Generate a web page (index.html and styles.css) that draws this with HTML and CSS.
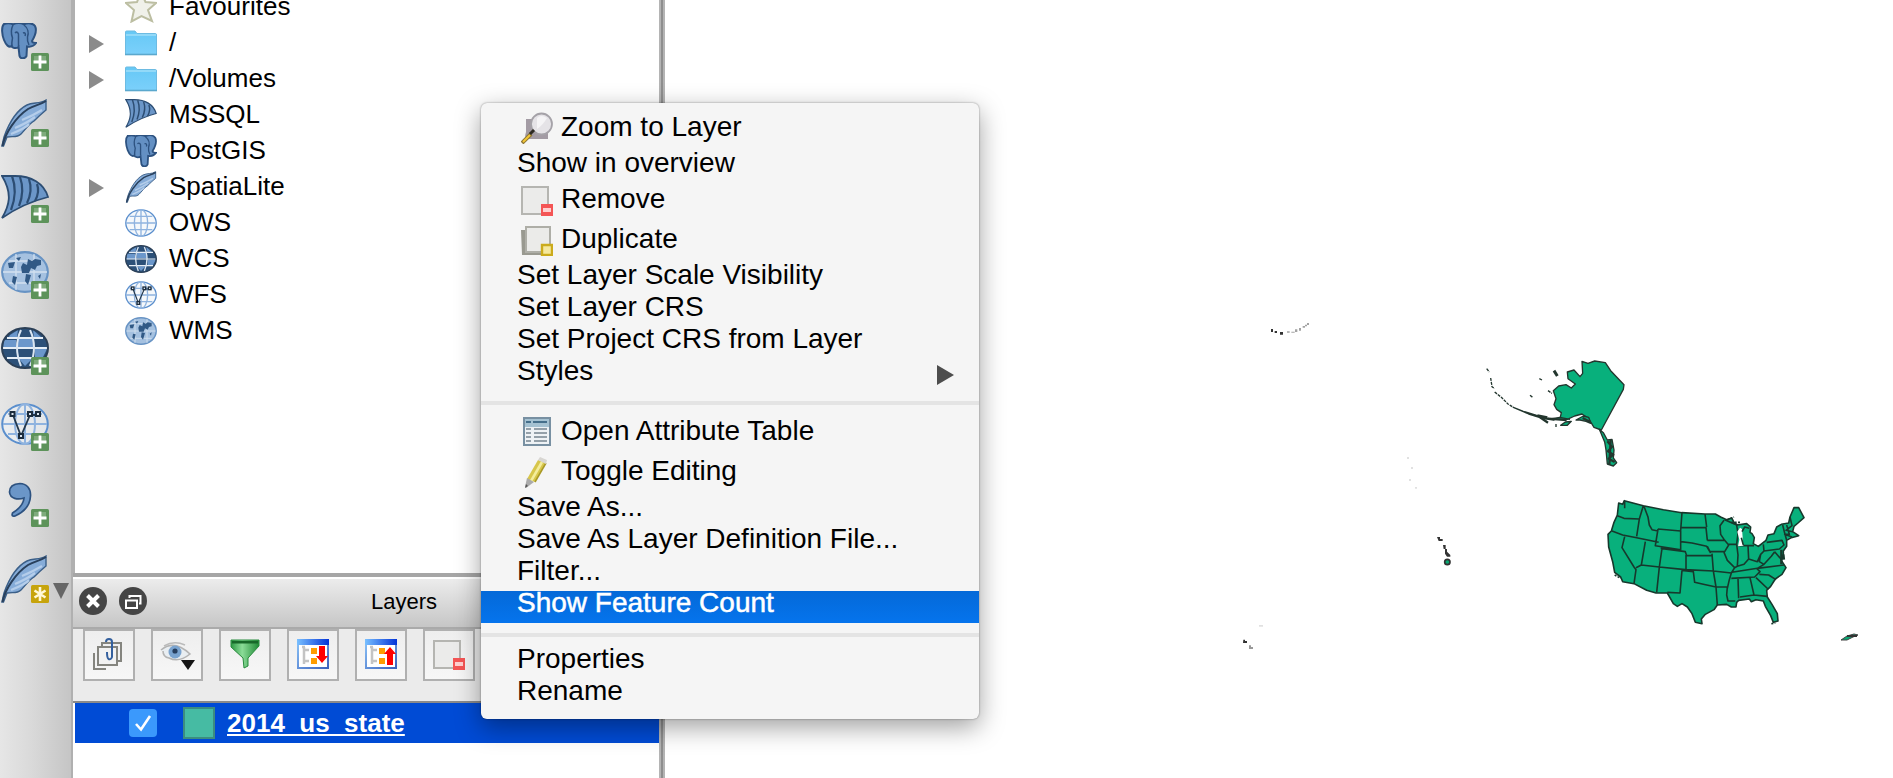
FILE: index.html
```html
<!DOCTYPE html>
<html lang="en">
<head>
<meta charset="utf-8">
<title>QGIS</title>
<link rel="stylesheet" href="styles.css">
</head>
<body>
<svg class="defs" aria-hidden="true">
  <defs>
    <linearGradient id="folderFill" x1="0" y1="0" x2="0" y2="1"><stop offset="0" stop-color="#66c8f5"/><stop offset="1" stop-color="#7bd0fb"/></linearGradient>
    <linearGradient id="funnelFill" x1="0" y1="0" x2="1" y2="0"><stop offset="0" stop-color="#2c9a43"/><stop offset=".4" stop-color="#8bdc98"/><stop offset="1" stop-color="#1f8a35"/></linearGradient>
    <linearGradient id="barFill" x1="0" y1="0" x2="1" y2="0"><stop offset="0" stop-color="#79c0ff"/><stop offset="1" stop-color="#0233d8"/></linearGradient>
    <linearGradient id="frameFill" x1="0" y1="0" x2="1" y2="1"><stop offset="0" stop-color="#8cc4f8"/><stop offset="1" stop-color="#3c62bd"/></linearGradient>
  </defs>
  <symbol id="elephant" viewBox="0 0 36 36">
    <path d="M3 1C7-.2 10 .4 12 1.400C15 0 20 0 23 1.200C27-.2 32 0 34 3C36 7 34 13 31 18C31 20 33 20 35 20C33 23 29 24 26 23.500L25.500 33C24 36 19.500 36.300 18.500 33L17.500 24C15 26 11 25 10.500 23C8 25 5 22 3 17C1 12 0 4 3 1Z" fill="#6490c3" stroke="#2d5280" stroke-width="2"/>
    <path d="M12 2C10 6 10 11 11.500 15C11 18 10.500 20 11 23M23 2C27 5 28 10 26.500 14C26 18 27 20 28 22M14 10C16 8 18 10 17.500 13L17.500 23M22 10C24 9 25 11 24 13" fill="none" stroke="#2d5280" stroke-width="1.500"/>
  </symbol>
  <symbol id="feather" viewBox="0 0 46 48">
    <path d="M1 47L3 38C8 24 16 11 26 6C32 3 39 5 45 1L45 11C39 16 37 18 33 22C28 25 24 31 20 35C16 39 12 37 6 38L2.500 47Z" fill="#86acd8" stroke="#3b5f88" stroke-width="1.400"/>
    <path d="M10 35Q25 29 28 25M14 29Q26 24 34 18M21 21Q31 17 41 11" fill="none" stroke="#b4cdea" stroke-width="2.200"/>
    <path d="M1.500 47C4 34 15 18 27 10C34 6 39 6 45 2" fill="none" stroke="#29405c" stroke-width="2"/>
  </symbol>
  <symbol id="fan" viewBox="0 0 48 44">
    <path d="M1 1L14 1C30 1 43 8 47 22C31 26 17 32 1 43C8 31 12 19 1 1Z" fill="#6b96c8" stroke="#2c4d73" stroke-width="1.800"/>
    <path d="M11 1Q17 17 10 35M19 2Q24 16 18 31M28 4Q32 16 26 28M36 9Q39 17 34 26" fill="none" stroke="#2c4d73" stroke-width="2.200"/>
  </symbol>
  <symbol id="globeLight" viewBox="0 0 48 42">
    <ellipse cx="24" cy="21" rx="22.800" ry="19.800" fill="#eef3f9" fill-opacity=".6" stroke="#5b8fcd" stroke-width="2"/>
    <path d="M2 21H46M7 11H41M7 31H41M24 1V41" stroke="#8fb3df" stroke-width="2" fill="none"/>
    <ellipse cx="24" cy="21" rx="10" ry="20" fill="none" stroke="#8fb3df" stroke-width="2"/>
  </symbol>
  <symbol id="globeDark" viewBox="0 0 48 42">
    <ellipse cx="24" cy="21" rx="23" ry="20" fill="#2c5078"/>
    <path d="M3 13H15V21H2ZM34 22H46L42 30H34ZM17 12H33V20H17ZM18 32H31L24 39ZM9 8L17 3L16 10H8ZM32 3L40 10H33Z" fill="#6b97cb"/>
    <path d="M2 21H46M6 11H42M6 31H42" stroke="#e6eef6" stroke-width="1.800"/>
    <path d="M20 3Q12 20 20 39M29 3Q37 20 29 39" stroke="#dbe6f2" stroke-width="2" fill="none"/>
    <ellipse cx="24" cy="21" rx="23" ry="20" fill="none" stroke="#2b3f56" stroke-width="2"/>
  </symbol>
  <symbol id="globeMap" viewBox="0 0 48 42">
    <ellipse cx="24" cy="21" rx="22.800" ry="19.800" fill="#a5c1e0" stroke="#6793c4" stroke-width="2.200"/>
    <path d="M2 21H46M8 10H40M8 32H40M15 3V39M33 3V39" stroke="#d3e1f0" stroke-width="1.300"/>
    <path d="M7 12L14 11L12 17H8ZM20 16L22 12L26 14L27 8L31 10L34 8L40 9V14L36 15L34 19L30 17L28 22H21ZM25 23L30 24L27 34L24 30ZM12 25L16 26L14 34L11 31ZM15 7L20 6L18 10ZM37 25L40 23L39 28Z" fill="#315985"/>
  </symbol>
  <symbol id="globeVector" viewBox="0 0 48 42">
    <use href="#globeLight" width="48" height="42"/>
    <path d="M12 12L20 33L29 12H38" fill="none" stroke="#24384c" stroke-width="1.800"/>
    <g fill="#dce5ef" stroke="#1c2c3c" stroke-width="2"><rect x="9.500" y="9" width="4" height="4"/><rect x="18" y="31" width="4" height="4"/><rect x="27" y="9" width="4" height="4"/><rect x="35" y="9" width="4" height="4"/></g>
  </symbol>
  <symbol id="plus" viewBox="0 0 18 18"><rect width="18" height="18" rx="1.500" fill="#5d935a"/><path d="M3 3H15V10H3Z" fill="#a2c3a0" opacity=".5"/><path d="M9 2.500V15.500M2.500 9H15.500" stroke="#fff" stroke-width="2.800"/></symbol>
  <symbol id="folder" viewBox="0 0 32 32"><path d="M.5 5Q.5 4 1.500 4H10L12 6.500H30.500Q31.500 6.500 31.500 8V27.500H.5Z" fill="url(#folderFill)" stroke="#6dbbe2" stroke-width="1"/><path d="M1 8H31" stroke="#a1def9" stroke-width="1.500"/><path d="M0 27.500H32" stroke="#5ba8cd" stroke-width="1.600"/></symbol>
  <symbol id="remove" viewBox="0 0 32 32"><path d="M1 3H27V30H1Z" fill="#ebebea" stroke="#b5b5b1" stroke-width="2"/><path d="M20 20H32V32H20Z" fill="#f45555"/><path d="M22 24H30V28H22Z" fill="#ffd0d0"/></symbol>
</svg>

<div class="app">
  <nav class="rail">
    <svg class="tool" viewBox="0 0 48 48"><use href="#elephant" width="36" height="36"/><use href="#plus" x="30" y="30" width="18" height="18"/></svg>
    <svg class="tool" viewBox="0 0 48 48"><use href="#feather" width="46" height="48"/><use href="#plus" x="30" y="30" width="18" height="18"/></svg>
    <svg class="tool" viewBox="0 0 48 48"><use href="#fan" width="48" height="44"/><use href="#plus" x="30" y="30" width="18" height="18"/></svg>
    <svg class="tool" viewBox="0 0 48 48"><use href="#globeMap" width="48" height="42"/><use href="#plus" x="30" y="30" width="18" height="18"/></svg>
    <svg class="tool" viewBox="0 0 48 48"><use href="#globeDark" width="48" height="42"/><use href="#plus" x="30" y="30" width="18" height="18"/></svg>
    <svg class="tool" viewBox="0 0 48 48"><use href="#globeVector" width="48" height="42"/><use href="#plus" x="30" y="30" width="18" height="18"/></svg>
    <svg class="tool" viewBox="0 0 48 48"><path d="M19 4.500C25 4.500 30 9 29.500 17C29 27 23 33 14 37Q10 38 11.500 34C18 30 22.500 26 23 19C17 21 9 20 8.500 13Q8.500 5 19 4.500Z" fill="#6b96c8" stroke="#2d5280" stroke-width="1.700"/><use href="#plus" x="30" y="30" width="18" height="18"/></svg>
    <div class="tool-split">
      <svg class="tool" viewBox="0 0 48 48"><use href="#feather" width="46" height="48"/><rect x="30" y="30" width="18" height="18" rx="1.500" fill="#c7a40c"/><path d="M39 32V46M33.500 35.500L44.500 42.500M44.500 35.500L33.500 42.500" stroke="#fff8d6" stroke-width="2.600"/></svg>
      <svg class="caret" viewBox="0 0 16 16"><path d="M0 0H16L8 16Z" fill="#666"/></svg>
    </div>
  </nav>

  <div class="side">
    <section class="browser">
      <div class="row"><span class="twist"></span><svg class="ico" viewBox="0 0 32 32"><path d="M16 1L20.500 11L31 12L23 19L27 30L16.500 25L6.500 30.500L9 19L1 12L12 11Z" fill="#f0f1ea" stroke="#bcbea2" stroke-width="2"/></svg><span class="label">Favourites</span></div>
      <div class="row"><span class="twist open"></span><svg class="ico"><use href="#folder"/></svg><span class="label">/</span></div>
      <div class="row"><span class="twist open"></span><svg class="ico"><use href="#folder"/></svg><span class="label">/Volumes</span></div>
      <div class="row"><span class="twist"></span><svg class="ico"><use href="#fan" width="32" height="29"/></svg><span class="label">MSSQL</span></div>
      <div class="row"><span class="twist"></span><svg class="ico"><use href="#elephant"/></svg><span class="label">PostGIS</span></div>
      <div class="row"><span class="twist open"></span><svg class="ico"><use href="#feather"/></svg><span class="label">SpatiaLite</span></div>
      <div class="row"><span class="twist"></span><svg class="ico"><use href="#globeLight"/></svg><span class="label">OWS</span></div>
      <div class="row"><span class="twist"></span><svg class="ico"><use href="#globeDark"/></svg><span class="label">WCS</span></div>
      <div class="row"><span class="twist"></span><svg class="ico"><use href="#globeVector"/></svg><span class="label">WFS</span></div>
      <div class="row"><span class="twist"></span><svg class="ico"><use href="#globeMap"/></svg><span class="label">WMS</span></div>
    </section>
    <section class="layers">
      <header class="dock-title">
        <svg class="round" viewBox="0 0 28 28"><circle cx="14" cy="14" r="14" fill="#454545"/><path d="M8.500 8.500L19.500 19.500M19.500 8.500L8.500 19.500" stroke="#fff" stroke-width="4"/></svg>
        <svg class="round" viewBox="0 0 28 28"><circle cx="14" cy="14" r="14" fill="#454545"/><path d="M7 13.500H18V21H7ZM10.500 11V9H21.500V16.500H20" fill="none" stroke="#fff" stroke-width="2"/></svg>
        <span class="dock-name">Layers</span>
      </header>
      <div class="dock-tools">
        <span class="btn"><svg viewBox="0 0 32 32"><path d="M9 9V5H28V23H24M1 15V31H13" fill="none" stroke="#85857f" stroke-width="2"/><path d="M5 9H24V27H5Z" fill="#f2f2f2" stroke="#85857f" stroke-width="2"/><path d="M13 4Q13 1 16 1Q19 1 19 4V19Q18 22 15.500 21Q14 20 14 14" fill="none" stroke="#34609e" stroke-width="2"/></svg></span>
        <span class="btn"><svg viewBox="0 0 32 32"><path d="M0 12Q13 1 29 16Q18 25 8 20Q2 19 2 13" fill="#e9eef2" stroke="#b4b4b4" stroke-width="1.600"/><path d="M3 8Q13 2 24 7" fill="none" stroke="#bbb" stroke-width="1.500"/><circle cx="14" cy="14" r="6.500" fill="#79a3cf"/><circle cx="14" cy="13" r="2.600" fill="#263e5e"/><path d="M20 22H34L27 32Z" fill="#151515"/></svg></span>
        <span class="btn"><svg viewBox="0 0 32 32"><path d="M2 2H30V8L19 20V28L15 30L14 20L2 9Z" fill="url(#funnelFill)" stroke="#278a3c" stroke-width="1"/><path d="M3 3H29V5.500H3Z" fill="#18692a"/></svg></span>
        <span class="btn"><svg viewBox="0 0 32 32"><path d="M1 2H31V30H1Z" fill="#fff" stroke="url(#frameFill)" stroke-width="2"/><path d="M0 1H32V7H0Z" fill="url(#barFill)"/><path d="M7 9V26M7 12H12M7 23H12M5 9H8" stroke="#c4c4c4" stroke-width="2.500"/><path d="M14 10H20V16H14ZM14 20H20V26H14Z" fill="#ff9c00"/><path d="M22 8H28V18H31L25 25L19 18H22Z" fill="#f00"/></svg></span>
        <span class="btn"><svg viewBox="0 0 32 32"><path d="M1 2H31V30H1Z" fill="#fff" stroke="url(#frameFill)" stroke-width="2"/><path d="M0 1H32V7H0Z" fill="url(#barFill)"/><path d="M7 9V26M7 12H12M7 23H12M5 9H8" stroke="#c4c4c4" stroke-width="2.500"/><path d="M14 10H20V16H14ZM14 20H20V26H14Z" fill="#ff9c00"/><path d="M22 27H28V16H31L25 9L19 16H22Z" fill="#f00"/></svg></span>
        <span class="btn"><svg viewBox="0 0 32 32"><use href="#remove"/></svg></span>
      </div>
      <div class="layer">
        <svg class="check" viewBox="0 0 28 28"><rect width="28" height="28" rx="4" fill="#3b99fc"/><path d="M7 15L12 20.500L21 7" fill="none" stroke="#fff" stroke-width="2.600"/></svg>
        <span class="swatch"></span>
        <span class="layer-name">2014_us_state</span>
      </div>
    </section>
  </div>
  <div class="splitter"></div>

  <main class="canvas">
    <svg class="map" viewBox="665 0 1228 778">
      <g transform="translate(1590 485) scale(.33333)" fill="#08b07c" stroke="#17382c" stroke-width="4.800" stroke-linejoin="round">
        <path d="M86 54L98 58L103 47L160 62L220 74L275 83L345 87L376 87L392 96L410 104L425 99L432 112L442 120L470 116L482 126L480 142L486 146L493 158L490 176L505 184L528 166L534 150L552 146L560 126L574 118L596 114L600 96L612 68L626 68L642 98L624 114L612 124L608 140L626 152L604 158L590 166L590 184L580 198L580 214L574 226L588 248L576 268L556 282L542 304L530 316L532 336L546 358L562 386L564 408L550 412L542 392L526 364L520 348L498 344L484 350L478 342L446 346L440 352L438 366L424 366L410 358L382 360L372 374L346 388L334 402L336 416L316 412L306 386L292 366L276 356L262 364L250 356L232 324L198 324L170 316L132 296L98 290L92 276L74 262L68 230L56 186L54 148L64 138L72 112L82 90Z"/>
        <g fill="none">
          <path d="M104 48V70M82 92L102 100L148 102L160 62M148 102L140 154M66 138L98 150L140 158L206 172M162 64L174 96L178 120L186 134L204 138M104 155L96 188L132 246L138 254L132 296M166 170L154 240L138 248M154 240L208 246L286 254L370 258M204 132L272 138V194L196 182L204 132M276 83L272 136M275 128H348L352 166M345 87L350 126M272 170L306 174L350 184L362 204M216 190L208 246L200 322M212 190L286 200L290 212H366M288 210V254M276 256L270 324L232 322M276 256L310 260L314 292L340 298L378 306M352 166H404L392 148L390 122L402 106M352 184L360 200H404L416 180L404 166M366 206L370 258L378 306L382 360M370 258L424 264L418 284L412 310M402 202L412 226L434 248L424 264M378 306H412L410 330L414 348H436M404 104L440 120L444 146L440 178H414M440 178L444 210L442 244L434 248M444 182L474 182H492M474 182L476 222L462 238L442 244M476 222L502 230L512 208L522 198L520 178M522 198L568 192L582 180L576 166L530 172M578 120L584 144L590 166M512 208L508 230L522 238L544 214L554 200M522 238L502 250L426 262M502 250L582 240M424 280L494 276L510 260L500 250M444 280L446 340M480 278L492 330L450 336M492 330L532 334M498 278L534 312M508 268L536 270L558 284M554 200L576 226M600 96L606 122L588 136L608 140M590 120L598 148L584 148L606 156"/>
          <path d="M574 194V238M580 208L582 224" stroke-width="7"/>
        </g>
        <path d="M442 140L450 128L456 132L460 182L444 184L448 164Z" fill="#fff" stroke="none"/>
        <path d="M456 140L464 126L478 130M460 180L454 158" fill="none"/>
        <path d="M74 270L92 280M544 416L556 414M412 104L432 96M424 112H450" stroke-dasharray="6 4" fill="none"/>
      </g>
      <g transform="translate(1460 340) scale(.33333)" fill="#08b07c" stroke="#23362e" stroke-width="4" stroke-linejoin="round">
        <path d="M366 64L384 70L404 63L436 68L452 92L492 134L490 148L424 270L402 262L386 236L366 222L344 228L322 238L300 236L304 218L290 208L282 194L288 176L280 152L296 138L318 134L334 144L346 132L324 116L322 96L342 90L360 110L368 100Z"/>
        <path d="M276 236L300 232L330 238M160 202L190 214L230 226L282 240L250 236L206 222Z"/>
        <path d="M348 240L370 228L386 232L392 250L378 244L360 240ZM302 256L316 246L334 244L322 256ZM418 268L430 278L442 300L456 298L462 330L460 354L470 368L460 378L442 372L438 330L434 306Z"/>
        <path d="M442 304L456 320L444 334L460 344L446 356L464 366M452 300L448 374M368 234L390 246M240 232L264 248M232 226L262 232M264 236L320 240" stroke-width="7" fill="none"/>
        <path d="M80 86L88 96M92 114L96 140L104 146M104 156L124 172L144 192L160 202M264 152L276 160M238 116L246 120M210 166L218 172M288 252V264" stroke-dasharray="9 3" fill="none"/>
        <path d="M282 92L292 108" stroke-width="9"/>
      </g>
      <g transform="translate(1230 300) scale(.33333)" fill="#333">
        <path d="M123 87h6v9h-6zM134 93h7v6h-7zM150 96h9v8h-9z"/>
        <path d="M171 94h8v4h-8zM184 95h10v3h-10zM195 88h7v8h-7zM207 84h6v8h-6zM218 78h7v5h-7zM225 74h6v5h-6zM231 69h6v6h-6z" opacity=".45"/>
        <path d="M531 471h6v6h-6zM543 501h6v6h-6zM555 561h6v5h-6zM87 975h12v5h-12zM537 537h6v6h-6z" opacity=".15"/>
        <path d="M621 711h9v6h8v6h-12zM639 735h8v12h-6zM645 747h6v8l10 10v5h-10l-6-9z"/>
        <path d="M40 1019h5v4h6v6H39z"/>
        <path d="M57 1036h6v5h6v6H57z" opacity=".5"/>
        <circle cx="652" cy="786" r="8" fill="#08a873" stroke="#333" stroke-width="5"/>
      </g>
      <path d="M1841 640L1847 636L1854 634L1858 635L1853 637L1847 640Z" fill="#08a873" stroke="#444" stroke-width="1"/>
      <path d="M1847 636H1857" stroke="#333" stroke-width="2"/>
    </svg>
  </main>

  <div class="menu">
    <div class="mi wide"><svg class="mico" viewBox="0 0 32 32"><path d="M5 7H12L27 20V27H6Q3 26 5 20Z" fill="#a39ba4"/><circle cx="20.500" cy="12" r="10.500" fill="#e5e3e7" stroke="#a5a2a8" stroke-width="1.800"/><path d="M16 6Q20 2 26 6Q22 13 16 17Z" fill="#f5f4f6"/><path d="M1 31L10 22" stroke="#8d7638" stroke-width="4"/><path d="M2 30L9 23" stroke="#f4c735" stroke-width="2"/><path d="M9 22L13 18" stroke="#2d2a22" stroke-width="3"/></svg><span>Zoom to Layer</span></div>
    <div class="mi"><span>Show in overview</span></div>
    <div class="mi wide"><svg class="mico low" viewBox="0 0 32 32"><use href="#remove"/></svg><span>Remove</span></div>
    <div class="mi wide"><svg class="mico low" viewBox="0 0 32 32"><path d="M0 6H5V28H24V31H1Z" fill="#999990"/><path d="M5 3H29V28H5Z" fill="#ebebe9" stroke="#aeaea7" stroke-width="2"/><path d="M21 21H31V31H21Z" fill="#f5e89e" stroke="#cbab1c" stroke-width="2.400"/></svg><span>Duplicate</span></div>
    <div class="mi"><span>Set Layer Scale Visibility</span></div>
    <div class="mi"><span>Set Layer CRS</span></div>
    <div class="mi"><span>Set Project CRS from Layer</span></div>
    <div class="mi"><span>Styles</span><svg class="sub" viewBox="0 0 17 20"><path d="M0 0L17 10L0 20Z" fill="#4d4d4d"/></svg></div>
    <div class="sep"></div>
    <div class="mi wide"><svg class="mico low" viewBox="0 0 32 32"><path d="M3 2H29V29H3Z" fill="#eef2f5" stroke="#7890a2" stroke-width="2"/><path d="M4 3H28V11H4Z" fill="#a5c2d2"/><path d="M5 6H10M12 6H26" stroke="#456f8b" stroke-width="2"/><path d="M5 13H10M13 13H26M5 17H10M13 17H26M5 21H10M13 21H26M5 25H10M13 25H26" stroke="#778590" stroke-width="1.600"/></svg><span>Open Attribute Table</span></div>
    <div class="mi wide"><svg class="mico" viewBox="0 0 32 32"><path d="M17 4L25 7L14 26L6 23Z" fill="#d7c64b"/><path d="M21 6L10 25" stroke="#f4ed9c" stroke-width="2.500"/><path d="M25 7L14 26" stroke="#a89825" stroke-width="1.500"/><path d="M17 4L19 1L26 4L25 8Z" fill="#d8d6d2"/><path d="M6 22L13 26L5 32L4 31Z" fill="#aaa"/><path d="M5 28L7 30L4 32Z" fill="#555"/></svg><span>Toggle Editing</span></div>
    <div class="mi"><span>Save As...</span></div>
    <div class="mi"><span>Save As Layer Definition File...</span></div>
    <div class="mi"><span>Filter...</span></div>
    <div class="mi active"><span>Show Feature Count</span></div>
    <div class="sep"></div>
    <div class="mi"><span>Properties</span></div>
    <div class="mi"><span>Rename</span></div>
  </div>
</div>
</body>
</html>
```
FILE: styles.css
```css
* { box-sizing: border-box; }
body { margin: 0; background: #fff; color: #000; font-family: "Liberation Sans", Arial, sans-serif; }
svg { display: block; flex: none; }
.defs { position: absolute; width: 0; height: 0; }
.app { position: relative; display: flex; width: 1893px; height: 778px; overflow: hidden; }

.rail { display: flex; flex: none; flex-direction: column; gap: 28px; width: 73px; padding: 23px 0 0 1px; background: linear-gradient(90deg, #e6e6e6, #d9d9d9 45%, #c5c5c5); border-right: 2px solid #b0b0b0; }
.tool { width: 48px; height: 48px; }
.tool-split { display: flex; gap: 4px; align-items: flex-end; }
.caret { width: 16px; height: 16px; margin-bottom: 4px; }

.side { display: flex; flex: none; flex-direction: column; width: 586px; }
.splitter { flex: none; width: 6px; border: solid #b4b4b4; border-width: 0 2px; background: #8e8e8e; }
.browser { height: 573px; overflow: hidden; padding-left: 14px; border-left: 2px solid #b0b0b0; }
.row { display: flex; align-items: flex-start; height: 36px; }
.row:first-child { margin-top: -10px; }
.twist { flex: none; width: 36px; height: 36px; }
.twist.open::before { content: ""; display: block; width: 15px; height: 18px; margin-top: 9px; background: #8b8b8b; clip-path: polygon(0 0, 100% 50%, 0 100%); }
.ico { width: 32px; height: 32px; margin-top: 1px; }
.label { margin-left: 12px; font-size: 26px; line-height: 33px; }

.layers { flex: 1; }
.dock-title { display: flex; gap: 12px; align-items: center; height: 56px; padding-left: 6px; border-top: 4px solid #a6a6a6; border-bottom: 2px solid #aaa; background: linear-gradient(#fff 2px, #ececec 2px, #c6c6c6); }
.round { width: 28px; height: 28px; margin-bottom: 2px; }
.dock-name { margin-left: 212px; font-size: 22px; line-height: 26px; margin-bottom: 1px; }
.dock-tools { display: flex; gap: 16px; height: 74px; padding-left: 10px; background: #ebebeb; border-bottom: 2px solid #8a8a8a; }
.btn { display: flex; align-items: center; justify-content: center; flex: none; width: 52px; height: 52px; border: 2px solid #b0b0b0; background: linear-gradient(#eee, #f7f7f7); }
.btn svg { width: 32px; height: 32px; margin-bottom: 2px; overflow: visible; }
.layer { display: flex; align-items: center; height: 40px; margin-left: 2px; padding-left: 54px; background: #004bd5; color: #fff; }
.check { width: 28px; height: 28px; }
.swatch { width: 32px; height: 32px; margin: 0 12px 0 26px; background: #46bba3; border: 2px solid #3c8d80; }
.layer-name { font-size: 26px; font-weight: 700; line-height: 30px; text-decoration: underline 2px; text-underline-offset: 2px; text-decoration-skip-ink: none; }

.canvas { flex: 1; background: #fff; }
.map { width: 1228px; height: 778px; }

.menu { position: absolute; left: 481px; top: 103px; width: 498px; padding: 8px 0; background: #f5f5f5; border-radius: 6px; box-shadow: 0 0 2px rgba(0,0,0,.45), 0 8px 26px rgba(0,0,0,.38); }
.mi { display: flex; height: 32px; padding-left: 36px; font-size: 28px; line-height: 24px; white-space: nowrap; }
.mi.wide { height: 40px; padding-left: 40px; line-height: 32px; }
.mi.active { background: linear-gradient(#0469d8, #0574ed); color: #fff; -webkit-text-stroke: .5px #fff; }
.mico { width: 32px; height: 32px; margin: 1px 8px 0 0; }
.mico.low { margin-top: 1px; }
.sub { width: 17px; height: 20px; margin: 6px 25px 0 auto; }
.sep { height: 24px; padding: 10px 0; background: #e4e4e4 content-box; }
```
